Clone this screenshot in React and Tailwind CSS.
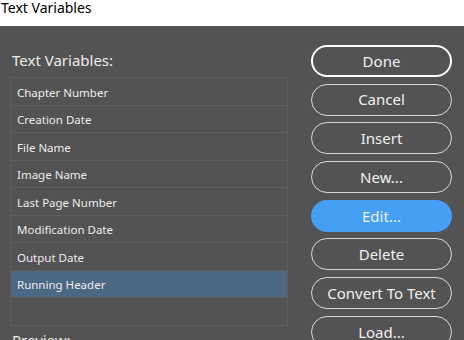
const ITEMS = [
  'Chapter Number',
  'Creation Date',
  'File Name',
  'Image Name',
  'Last Page Number',
  'Modification Date',
  'Output Date',
  'Running Header',
]

const BUTTONS = ['Done', 'Cancel', 'Insert', 'New...', 'Edit...', 'Delete', 'Convert To Text', 'Load...']

export default function App() {
  return (
    <div className="w-[464px] h-[340px] overflow-hidden bg-white font-['Noto_Sans',sans-serif]">
      {/* title bar */}
      <div className="h-[26px] flex items-start pl-px">
        <span className="text-[14px] leading-[16px] text-black">Text Variables</span>
      </div>

      <div className="h-[314px] bg-[#535353] flex">
        {/* left */}
        <div className="w-[300px] pl-[10px] pt-[24px]">
          <p className="pl-[2px] text-[15px] leading-[20px] text-[#ececec]">Text Variables:</p>
          <div className="mt-[7px] w-[278px] border border-[#5e5e5e]">
            {ITEMS.map((label) => (
              <div
                key={label}
                className={`h-[27.5px] flex items-center pl-[6px] pt-[2px] border-b border-[#5e5e5e] text-[11.5px] text-[#ececec] ${
                  label === 'Running Header' ? 'bg-[#4b6885]' : ''
                }`}
              >
                {label}
              </div>
            ))}
            <div className="h-[27px]" />
          </div>
          <p className="mt-[4px] pl-[2px] text-[15px] leading-[20px] text-[#ececec]">Preview:</p>
        </div>

        {/* buttons */}
        <div className="pl-[11px] pt-[19px] flex flex-col gap-[6.7px]">
          {BUTTONS.map((label) => (
            <button
              key={label}
              className={`w-[141px] h-[32px] shrink-0 rounded-full text-[15px] flex items-center justify-center ${
                label === 'Done'
                  ? 'border-2 border-white text-[#f0f0f0]'
                  : label === 'Edit...'
                  ? 'bg-[#45a0f5] text-[#f0f0f0]'
                  : 'border border-[#d8d8d8] text-[#f0f0f0]'
              }`}
            >
              {label}
            </button>
          ))}
        </div>
      </div>
    </div>
  )
}
